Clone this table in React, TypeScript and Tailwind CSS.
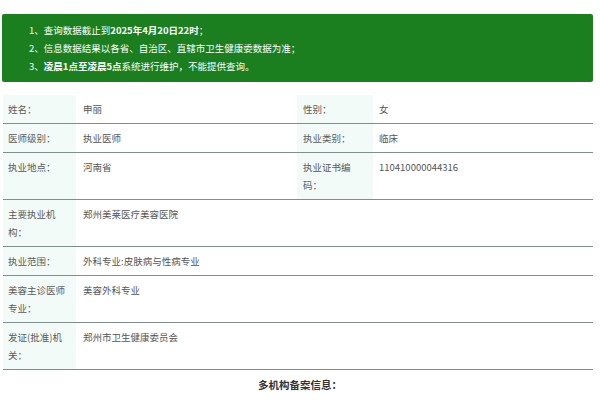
const font = { fontFamily: '"Microsoft YaHei", "Noto Sans CJK SC", "Noto Sans", sans-serif' };

type Cell = { label: string; value: string };

function Label({ children, right }: { children: React.ReactNode; right?: boolean }) {
  return (
    <div
      className={`bg-[#f2fbf7] py-[5px] pr-[5px] leading-[18px] text-[#5a5a5a] ${right ? 'w-[76px] pl-[6px]' : 'w-[73px] pl-[5px]'} shrink-0`}
    >
      {children}
    </div>
  );
}

function PairRow({ left, right }: { left: Cell; right: Cell }) {
  return (
    <div className="flex border-b border-[#808e8e]">
      <Label>{left.label}</Label>
      <div className="w-[221px] shrink-0 py-[5px] pl-[7px] leading-[18px] text-[#555]">{left.value}</div>
      <Label right>{right.label}</Label>
      <div className="flex-1 py-[5px] pl-[6px] leading-[18px] text-[#555]">{right.value}</div>
    </div>
  );
}

function WideRow({ label, value }: Cell) {
  return (
    <div className="flex border-b border-[#808e8e]">
      <Label>{label}</Label>
      <div className="flex-1 py-[5px] pl-[7px] leading-[18px] text-[#555]">{value}</div>
    </div>
  );
}

export default function App() {
  return (
    <div className="h-[400px] w-[600px] overflow-hidden bg-white pt-[14px] text-[9.5px]" style={font}>
      <div className="mx-[2px] w-[591px] rounded-[2px] bg-[#1b7f1f] py-[7px] pl-[27px] leading-[18px] text-white">
        <p>1、查询数据截止到<b>2025年4月20日22时</b>；</p>
        <p>2、信息数据结果以各省、自治区、直辖市卫生健康委数据为准；</p>
        <p>3、<b>凌晨1点至凌晨5点</b>系统进行维护，不能提供查询。</p>
      </div>

      <div className="mx-[3px] mt-[13px] w-[590px]">
        <PairRow left={{ label: '姓名：', value: '申丽' }} right={{ label: '性别：', value: '女' }} />
        <PairRow
          left={{ label: '医师级别：', value: '执业医师' }}
          right={{ label: '执业类别：', value: '临床' }}
        />
        <PairRow
          left={{ label: '执业地点：', value: '河南省' }}
          right={{ label: '执业证书编码：', value: '110410000044316' }}
        />
        <WideRow label="主要执业机构：" value="郑州美莱医疗美容医院" />
        <WideRow label="执业范围：" value="外科专业:皮肤病与性病专业" />
        <WideRow label="美容主诊医师专业：" value="美容外科专业" />
        <WideRow label="发证(批准)机关：" value="郑州市卫生健康委员会" />
      </div>

      <div className="mt-[6px] text-center text-[10.5px] font-bold leading-[18px] text-[#333]">多机构备案信息：</div>
    </div>
  );
}
